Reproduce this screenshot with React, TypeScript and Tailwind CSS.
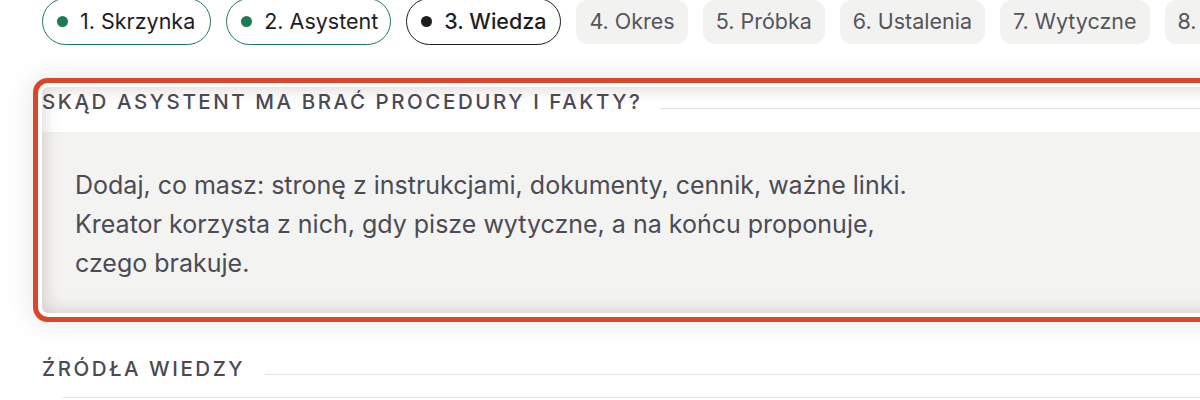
import React from "react";

const done = [
  { t: "1. Skrzynka", pr: "pr-[15px]" },
  { t: "2. Asystent", pr: "pr-[12px]" },
];
const rest = ["4. Okres", "5. Próbka", "6. Ustalenia", "7. Wytyczne", "8. Podsumowanie"];

export default function App() {
  return (
    <div
      className="w-[1200px] h-[400px] overflow-hidden bg-white"
      style={{ fontFamily: "Inter, 'Noto Sans', sans-serif" }}
    >
      <div className="pl-[42px]">
        {/* steps */}
        <div className="flex items-center gap-[15px] -mt-[2px] whitespace-nowrap">
          {done.map((d) => (
            <div
              key={d.t}
              className={
                "h-[47px] flex items-center gap-[12px] pl-[14px] rounded-full border-[1.5px] border-[#1e7a55] text-[21.5px] text-[#1d1d1f] " +
                d.pr
              }
            >
              <span className="w-[11px] h-[11px] rounded-full bg-[#1e7a55]" />
              {d.t}
            </div>
          ))}
          <div className="h-[47px] flex items-center gap-[12px] pl-[14px] pr-[14px] rounded-full border-[1.5px] border-[#1d1d1f] text-[21.5px] font-medium text-[#1d1d1f]">
            <span className="w-[11px] h-[11px] rounded-full bg-[#1d1d1f]" />
            3. Wiedza
          </div>
          {rest.map((t) => (
            <div
              key={t}
              className="h-[44px] flex items-center px-[13px] rounded-[12px] bg-[#f2f2f0] text-[21.5px] text-[#55555c]"
            >
              {t}
            </div>
          ))}
        </div>

        {/* highlighted section */}
        <div className="mt-[42px] relative w-[1240px] rounded-[6px] bg-white shadow-[0_0_0_4px_#ffffff,0_0_0_9px_#d9472b,0_0_28px_10px_rgba(0,0,0,0.10)]">
          <div className="flex items-start h-[45px] pt-[5px]">
            <div className="text-[20.5px] leading-[20px] font-medium tracking-[0.125em] text-[#4a4a55]">
              SKĄD ASYSTENT MA BRAĆ PROCEDURY I FAKTY?
            </div>
            <div className="flex-1 ml-[18px] mt-[16px] h-px bg-[#e2e2e0]" />
          </div>
          <div className="bg-[#f3f3f1] rounded-b-[6px] pl-[33px] pt-[34px] pb-[30px] text-[25px] leading-[39px] text-[#4b4b55]">
            <p>Dodaj, co masz: stronę z instrukcjami, dokumenty, cennik, ważne linki.</p>
            <p>Kreator korzysta z nich, gdy pisze wytyczne, a na końcu proponuje,</p>
            <p>czego brakuje.</p>
          </div>
          <div className="pointer-events-none absolute inset-0 rounded-[6px] shadow-[inset_0_0_18px_rgba(120,70,60,0.28)]" />
        </div>

        {/* sources */}
        <div className="mt-[46px] flex items-start">
          <div className="text-[20.5px] leading-[20px] font-medium tracking-[0.125em] text-[#4a4a55]">
            ŹRÓDŁA WIEDZY
          </div>
          <div className="flex-1 ml-[20px] mt-[15px] h-px bg-[#e2e2e0]" />
        </div>
        <div className="mt-[18px] ml-[20px] h-px bg-[#e8e8e6]" />
      </div>
    </div>
  );
}
